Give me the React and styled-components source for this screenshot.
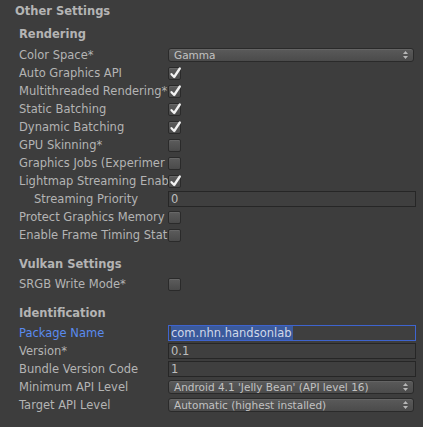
import React from "react";
import styled, { createGlobalStyle } from "styled-components";

const Global = createGlobalStyle`
  html, body { margin: 0; padding: 0; background: #3d3d3d; }
  body { font-family: "DejaVu Sans", "Liberation Sans", sans-serif; }
`;

const Panel = styled.div`
  width: 423px;
  height: 427px;
  background: #3d3d3d;
  color: #b4b4b4;
  font-size: 11.5px;
  overflow: hidden;
  box-sizing: border-box;
`;

const Title = styled.div`
  padding: 4px 0 0 15px;
  height: 24px;
  box-sizing: border-box;
  line-height: 14px;
  font-weight: bold;
  font-size: 11.5px;
  color: #b4b4b4;
`;

const SectionHeader = styled.div`
  padding: ${(p) => (p.$first ? "3px 0 5px 19px" : "13px 0 4px 19px")};
  line-height: 14px;
  font-weight: bold;
  color: #b4b4b4;
`;

const Row = styled.div`
  display: grid;
  grid-template-columns: 149px 248px;
  height: 18px;
  padding-left: 19px;
  align-items: center;
`;

const Label = styled.div`
  line-height: 18px;
  white-space: nowrap;
  padding-left: ${(p) => (p.$indent ? "15px" : "0")};
  color: ${(p) => (p.$focused ? "#5a8bef" : "#b4b4b4")};
`;

const CheckBox = styled.div`
  position: relative;
  width: 13px;
  height: 13px;
  box-sizing: border-box;
  border: 1px solid #2a2a2a;
  border-radius: 2px;
  background: linear-gradient(#5c5c5c, #4a4a4a);
  box-shadow: inset 0 1px 0 rgba(255, 255, 255, 0.08);
`;

const Check = styled.svg`
  position: absolute;
  left: 0px;
  top: -2px;
`;

const Field = styled.div`
  height: 16px;
  box-sizing: border-box;
  border: 1px solid ${(p) => (p.$focused ? "#3e64cf" : "#262626")};
  background: #3f3f3f;
  padding-left: 2px;
  line-height: 14px;
  font-size: 11.5px;
  color: #bdbdbd;
  white-space: nowrap;
  overflow: hidden;
`;

const Selected = styled.span`
  background: #3b5a9c;
  color: #d0d8e8;
  padding: 0 1px 1px 0;
`;

const Dropdown = styled.div`
  height: 14px;
  margin-right: 2px;
  box-sizing: border-box;
  border: 1px solid #2a2a2a;
  border-radius: 3px;
  background: linear-gradient(#5a5a5a, #4b4b4b);
  box-shadow: inset 0 1px 0 rgba(255, 255, 255, 0.07);
  display: flex;
  align-items: center;
  justify-content: space-between;
  padding: 0 5px 0 5px;
  font-size: 10.5px;
  line-height: 12px;
  color: #c2c2c2;
  white-space: nowrap;
`;

const Arrows = () => (
  <svg width="5" height="8" viewBox="0 0 5 8">
    <path d="M2.5 0 L5 3 L0 3 Z" fill="#b8b8b8" />
    <path d="M0 5 L5 5 L2.5 8 Z" fill="#b8b8b8" />
  </svg>
);

const Toggle = ({ on }) => (
  <CheckBox>
    {on && (
      <Check width="13" height="14" viewBox="0 0 13 14">
        <path
          d="M2.5 8.2 L5.2 11 L10.8 2.5"
          fill="none"
          stroke="#f2f2f2"
          strokeWidth="2.3"
          strokeLinecap="round"
          strokeLinejoin="round"
        />
      </Check>
    )}
  </CheckBox>
);

const CheckRow = ({ label, on }) => (
  <Row>
    <Label>{label}</Label>
    <Toggle on={on} />
  </Row>
);

export default function App() {
  return (
    <Panel>
      <Global />
      <Title>Other Settings</Title>
      <SectionHeader $first>Rendering</SectionHeader>
      <Row>
        <Label>Color Space*</Label>
        <Dropdown>
          <span>Gamma</span>
          <Arrows />
        </Dropdown>
      </Row>
      <CheckRow label="Auto Graphics API" on />
      <CheckRow label="Multithreaded Rendering*" on />
      <CheckRow label="Static Batching" on />
      <CheckRow label="Dynamic Batching" on />
      <CheckRow label="GPU Skinning*" />
      <CheckRow label="Graphics Jobs (Experimer" />
      <CheckRow label="Lightmap Streaming Enab" on />
      <Row>
        <Label $indent>Streaming Priority</Label>
        <Field>0</Field>
      </Row>
      <CheckRow label="Protect Graphics Memory" />
      <CheckRow label="Enable Frame Timing Stat" />

      <SectionHeader>Vulkan Settings</SectionHeader>
      <CheckRow label="SRGB Write Mode*" />

      <SectionHeader>Identification</SectionHeader>
      <Row>
        <Label $focused>Package Name</Label>
        <Field $focused>
          <Selected>com.nhn.handsonlab</Selected>
        </Field>
      </Row>
      <Row>
        <Label>Version*</Label>
        <Field>0.1</Field>
      </Row>
      <Row>
        <Label>Bundle Version Code</Label>
        <Field>1</Field>
      </Row>
      <Row>
        <Label>Minimum API Level</Label>
        <Dropdown>
          <span>Android 4.1 'Jelly Bean' (API level 16)</span>
          <Arrows />
        </Dropdown>
      </Row>
      <Row>
        <Label>Target API Level</Label>
        <Dropdown>
          <span>Automatic (highest installed)</span>
          <Arrows />
        </Dropdown>
      </Row>
    </Panel>
  );
}
